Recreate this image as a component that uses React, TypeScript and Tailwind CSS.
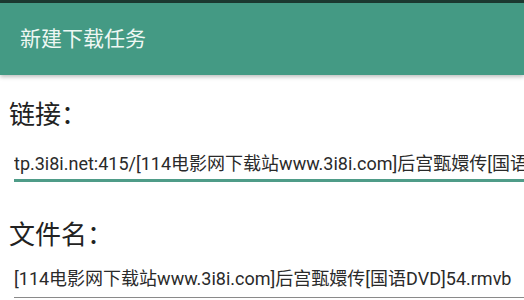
const App = () => {
  const font = { fontFamily: '"Roboto", "Noto Sans CJK SC", sans-serif' };
  return (
    <div className="w-[524px] h-[300px] overflow-hidden bg-white" style={font}>
      {/* Status bar strip */}
      <div className="h-[3px] bg-[#1c3a31]" />

      {/* Toolbar */}
      <header className="h-[72px] bg-[#449a84] flex items-center px-[20px] shadow-[0_2px_4px_rgba(0,0,0,0.25)] relative">
        <h1 className="text-[21px] text-[#eef7f3] leading-none">新建下载任务</h1>
      </header>

      <div className="flex flex-col">
        {/* Link */}
        <label className="pl-[9px] mt-[25px] text-[26px] leading-[30px] text-[#222]">链接：</label>
        <div className="ml-[14px] mt-[23px] overflow-hidden whitespace-nowrap text-[18px] leading-[22px] text-[#2a2a2a]">
          tp.3i8i.net:415/[114电影网下载站www.3i8i.com]后宫甄嬛传[国语DVD]54.rmvb
        </div>
        <div className="ml-[14px] mt-[4px] h-[3px] bg-[#4f9c88]" />

        {/* File name */}
        <label className="pl-[9px] mt-[38px] text-[26px] leading-[30px] text-[#222]">文件名：</label>
        <div className="ml-[14px] mt-[18px] overflow-hidden whitespace-nowrap text-[18px] leading-[22px] text-[#2a2a2a]">
          [114电影网下载站www.3i8i.com]后宫甄嬛传[国语DVD]54.rmvb
        </div>
        <div className="ml-[14px] mt-[7px] h-px bg-[#8a8a8a]" />
      </div>
    </div>
  );
};

export default App;
